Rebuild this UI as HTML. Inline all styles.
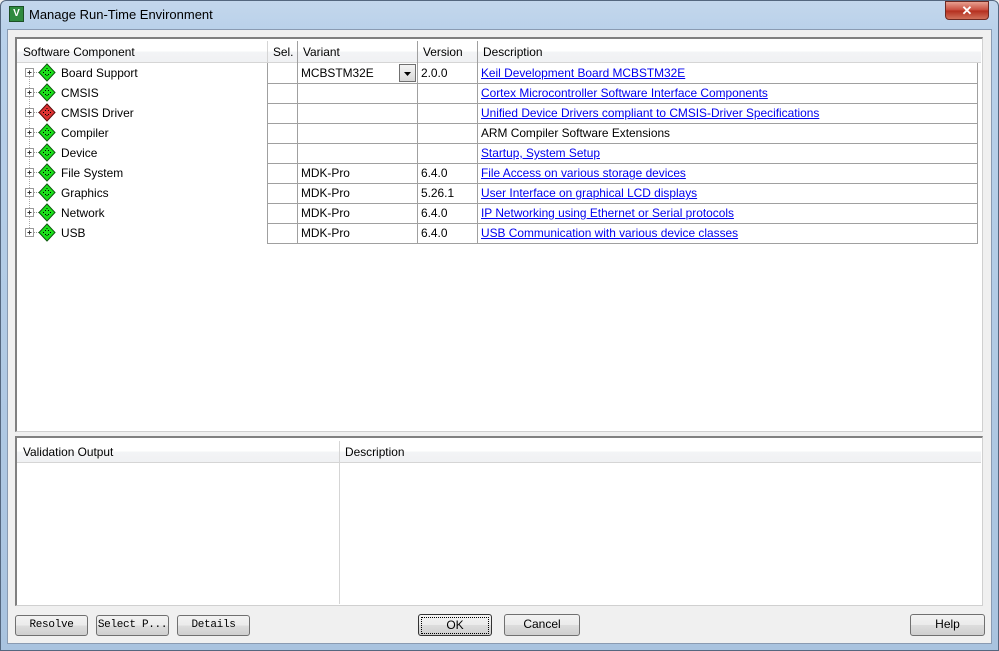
<!DOCTYPE html>
<html><head><style>
*{margin:0;padding:0;box-sizing:border-box}
body{width:999px;height:651px;overflow:hidden;background:#f0f0f0;font-family:"Liberation Sans",Tahoma,sans-serif;font-size:12px;color:#000;position:relative}
.a{position:absolute}
.frame{left:0;top:0;width:999px;height:651px;background:linear-gradient(180deg,#c4d7ec 0,#b9d1ea 30px,#a9c3df 100%);border:1px solid #55677f;border-radius:6px 6px 0 0}
.client{left:7px;top:29px;width:985px;height:615px;background:#f0f0f0;border:1px solid #8a9bb2}
.panel{background:#fff;border-top:2px solid #808080;border-left:2px solid #808080;border-right:1px solid #d0d0d0;border-bottom:1px solid #d0d0d0}
.hdr{background:linear-gradient(#fff 0,#fff 50%,#f3f4f6 50%,#f0f1f3 100%);border-bottom:1px solid #d5d5d5}
.t{white-space:nowrap;line-height:20px;font-size:11.9px}
.lk{color:#0000ee;text-decoration:underline}
.hl{height:1px;background:#a0a0a0}
.vl{width:1px;background:#a0a0a0}
.btn{border:1px solid #707070;border-radius:3px;background:linear-gradient(#f2f2f2,#ebebeb 50%,#dddddd 50%,#cfcfcf);text-align:center;line-height:19px;font-size:12px;white-space:nowrap;overflow:hidden}
.mono{font-family:"Liberation Mono",monospace;font-size:11px;letter-spacing:-0.3px}
</style></head><body>
<div class="a frame"></div>
<div class="a" style="left:9px;top:6px;width:15px;height:16px;background:#2f8a3f;border:1px solid #1c5026;color:#fff;font-size:10px;font-weight:bold;line-height:14px;text-align:center">V</div>
<div class="a t" style="left:29px;top:5px;font-size:13px">Manage Run-Time Environment</div>
<div class="a" style="left:945px;top:1px;width:44px;height:19px;border:1px solid #6d2a23;border-radius:0 0 4px 4px;background:linear-gradient(#e8a090,#c7493a 50%,#b32c1c 50%,#d0705a);color:#fff;font-weight:bold;text-align:center;line-height:17px;font-size:13px">✕</div>
<div class="a client"></div>

<div class="a panel" style="left:15px;top:37px;width:968px;height:395px"></div>
<div class="a hdr" style="left:17px;top:41px;width:964px;height:22px"></div>
<div class="a t" style="left:23px;top:42px">Software Component</div>
<div class="a t" style="left:273px;top:42px">Sel.</div>
<div class="a t" style="left:303px;top:42px">Variant</div>
<div class="a t" style="left:423px;top:42px">Version</div>
<div class="a t" style="left:483px;top:42px">Description</div>
<div class="a vl" style="left:267px;top:41px;height:203px;background:#d5d5d5"></div>
<div class="a vl" style="left:267px;top:63px;height:181px"></div>
<div class="a vl" style="left:297px;top:41px;height:203px"></div>
<div class="a vl" style="left:417px;top:41px;height:203px"></div>
<div class="a vl" style="left:477px;top:41px;height:203px"></div>
<div class="a vl" style="left:977px;top:63px;height:181px"></div>
<div class="a hl" style="left:267px;top:83px;width:711px"></div>
<div class="a hl" style="left:267px;top:103px;width:711px"></div>
<div class="a hl" style="left:267px;top:123px;width:711px"></div>
<div class="a hl" style="left:267px;top:143px;width:711px"></div>
<div class="a hl" style="left:267px;top:163px;width:711px"></div>
<div class="a hl" style="left:267px;top:183px;width:711px"></div>
<div class="a hl" style="left:267px;top:203px;width:711px"></div>
<div class="a hl" style="left:267px;top:223px;width:711px"></div>
<div class="a hl" style="left:267px;top:243px;width:711px"></div>

<svg class="a" style="left:20px;top:63px" width="40" height="180">
<defs>
<g id="pl"><rect x="5.5" y="5.5" width="8" height="8" fill="#fff" stroke="#9a9a9a"/><path d="M7.5 9.5h4M9.5 7.5v4" stroke="#333"/><path d="M14 9.5h6" stroke="#999" stroke-dasharray="1 1"/></g>
<g id="dg"><path d="M27 1l8 8.5-8 8.5-8-8.5z" fill="#1be01b" stroke="#0a5a0a"/><path d="M27 5v1M27 12v1M23 9.5h1M30 9.5h1M25 7.5h1M28 7.5h1M25 11.5h1M28 11.5h1" stroke="#000"/></g>
<g id="dr"><path d="M27 1l8 8.5-8 8.5-8-8.5z" fill="#d33" stroke="#5a0a0a"/><path d="M27 5v1M27 12v1M23 9.5h1M30 9.5h1M25 7.5h1M28 7.5h1M25 11.5h1M28 11.5h1" stroke="#000"/></g>
</defs>
<path d="M9.5 14v160" stroke="#aaa" stroke-dasharray="1 1"/>
<use href="#pl" y="0"/><use href="#dg" y="0"/>
<use href="#pl" y="20"/><use href="#dg" y="20"/>
<use href="#pl" y="40"/><use href="#dr" y="40"/>
<use href="#pl" y="60"/><use href="#dg" y="60"/>
<use href="#pl" y="80"/><use href="#dg" y="80"/>
<use href="#pl" y="100"/><use href="#dg" y="100"/>
<use href="#pl" y="120"/><use href="#dg" y="120"/>
<use href="#pl" y="140"/><use href="#dg" y="140"/>
<use href="#pl" y="160"/><use href="#dg" y="160"/>
</svg>

<div class="a t" style="left:61px;top:63px">Board Support</div>
<div class="a t" style="left:61px;top:83px">CMSIS</div>
<div class="a t" style="left:61px;top:103px">CMSIS Driver</div>
<div class="a t" style="left:61px;top:123px">Compiler</div>
<div class="a t" style="left:61px;top:143px">Device</div>
<div class="a t" style="left:61px;top:163px">File System</div>
<div class="a t" style="left:61px;top:183px">Graphics</div>
<div class="a t" style="left:61px;top:203px">Network</div>
<div class="a t" style="left:61px;top:223px">USB</div>

<div class="a t" style="left:301px;top:63px">MCBSTM32E</div>
<div class="a" style="left:399px;top:64px;width:17px;height:18px;border:1px solid #707070;background:linear-gradient(#f4f4f4,#d8d8d8)"><svg width="15" height="16"><path d="M4 7h7l-3.5 4z" fill="#000"/></svg></div>
<div class="a t" style="left:301px;top:163px">MDK-Pro</div>
<div class="a t" style="left:301px;top:183px">MDK-Pro</div>
<div class="a t" style="left:301px;top:203px">MDK-Pro</div>
<div class="a t" style="left:301px;top:223px">MDK-Pro</div>

<div class="a t" style="left:421px;top:63px">2.0.0</div>
<div class="a t" style="left:421px;top:163px">6.4.0</div>
<div class="a t" style="left:421px;top:183px">5.26.1</div>
<div class="a t" style="left:421px;top:203px">6.4.0</div>
<div class="a t" style="left:421px;top:223px">6.4.0</div>

<div class="a t lk" style="left:481px;top:63px">Keil Development Board MCBSTM32E</div>
<div class="a t lk" style="left:481px;top:83px">Cortex Microcontroller Software Interface Components</div>
<div class="a t lk" style="left:481px;top:103px">Unified Device Drivers compliant to CMSIS-Driver Specifications</div>
<div class="a t" style="left:481px;top:123px">ARM Compiler Software Extensions</div>
<div class="a t lk" style="left:481px;top:143px">Startup, System Setup</div>
<div class="a t lk" style="left:481px;top:163px">File Access on various storage devices</div>
<div class="a t lk" style="left:481px;top:183px">User Interface on graphical LCD displays</div>
<div class="a t lk" style="left:481px;top:203px">IP Networking using Ethernet or Serial protocols</div>
<div class="a t lk" style="left:481px;top:223px">USB Communication with various device classes</div>

<div class="a panel" style="left:15px;top:436px;width:968px;height:170px"></div>
<div class="a hdr" style="left:17px;top:441px;width:964px;height:22px"></div>
<div class="a vl" style="left:339px;top:441px;height:163px;background:#d5d5d5"></div>
<div class="a t" style="left:23px;top:442px">Validation Output</div>
<div class="a t" style="left:345px;top:442px">Description</div>

<div class="a btn mono" style="left:15px;top:615px;width:73px;height:21px">Resolve</div>
<div class="a btn mono" style="left:96px;top:615px;width:73px;height:21px">Select P...</div>
<div class="a btn mono" style="left:177px;top:615px;width:73px;height:21px">Details</div>
<div class="a btn" style="left:418px;top:614px;width:74px;height:22px;border-color:#333"><div style="margin:2px;border:1px dotted #000;line-height:15px">OK</div></div>
<div class="a btn" style="left:504px;top:614px;width:76px;height:22px">Cancel</div>
<div class="a btn" style="left:910px;top:614px;width:75px;height:22px">Help</div>
</body></html>
